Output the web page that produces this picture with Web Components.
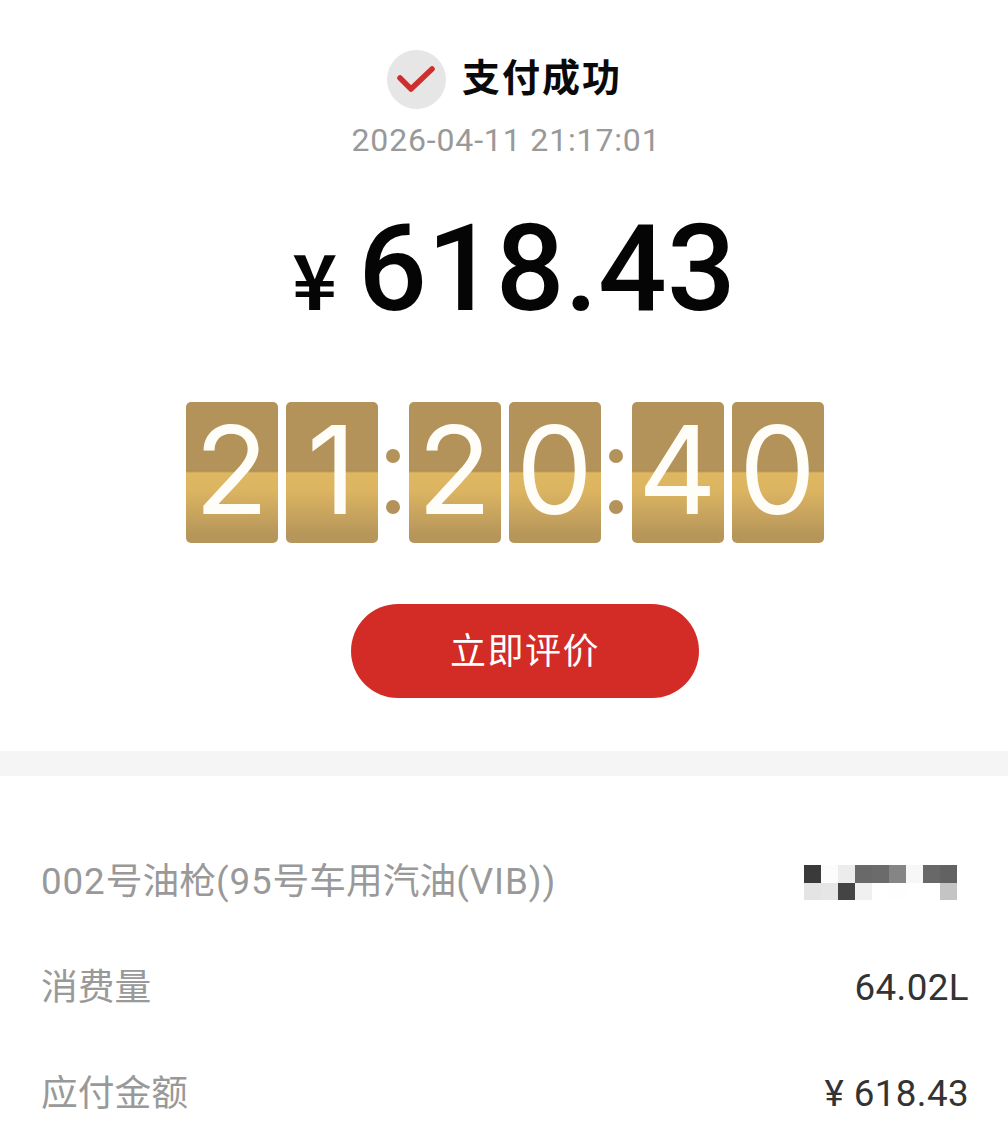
<!DOCTYPE html>
<html lang="zh"><head><meta charset="utf-8">
<style>
html,body{margin:0;padding:0;background:#fff}
body{width:1008px;height:1146px;overflow:hidden;font-family:Roboto,"Noto Sans CJK SC",sans-serif}
</style></head><body>
<pay-result></pay-result>
<script>
function def(name,html,init){
  customElements.define(name,class extends HTMLElement{
    constructor(){super();this.attachShadow({mode:'open'}).innerHTML=html;}
    connectedCallback(){if(init)init(this);}
  });
}
def('flip-digit',`<style>
:host{display:block;width:92px;height:141px;border-radius:5px;position:relative;
background:linear-gradient(#b39359 0,#b39359 68px,#ad8d50 69px,#dfb761 71px,#dcb562 88px,#b7965a 132px,#b6955a 141px);
color:#fffdf8;font:400 122px/135px Inter,sans-serif;text-align:center}
</style><slot></slot>`);
def('flip-colon',`<style>
:host{display:flex;flex-direction:column;justify-content:center;gap:37px;width:15px;align-items:center;height:141px;padding-top:18px;box-sizing:border-box}
i{width:14px;height:14px;border-radius:50%;background:#b39359;display:block}
</style><i></i><i></i>`);
def('pixel-mask',`<style>
:host{display:grid;grid-template-columns:repeat(9,17px);grid-template-rows:18px 17px}
i{display:block}
</style>`,el=>{
  if(el.shadowRoot.querySelector('i'))return;
  const c=['3a3a3a','fcfcfc','ececec','696969','6b6b6b','858585','f7f7f7','686868','626262',
           'e4e4e4','e6e6e6','444444','f0f0f0','ffffff','fefefe','ffffff','ffffff','c4c4c4'];
  c.forEach(x=>{const i=document.createElement('i');i.style.background='#'+x;el.shadowRoot.appendChild(i);});
});
def('info-row',`<style>
:host{display:flex;justify-content:space-between;align-items:center;height:106px;color:#999;font:400 36.75px/50px Roboto,"Noto Sans CJK SC",sans-serif}
.r{color:#333;display:flex;align-items:center;letter-spacing:.4px}
</style><div class="l"><slot name="l"></slot></div><div class="r"><slot name="r"></slot></div>`);
def('pay-result',`<style>
:host{display:block;width:1008px}
.top{display:flex;flex-direction:column;align-items:center;height:751px;box-sizing:border-box;padding-top:50px}
.head{display:flex;align-items:center;gap:16px;height:59px;margin-left:1px}
.icon{width:59px;height:59px;border-radius:50%;background:#e6e6e6;display:flex;align-items:center;justify-content:center}
h1{margin:0;font:700 38px/50px "Noto Sans CJK SC",sans-serif;padding-bottom:9px;color:#0a0a0a;letter-spacing:2px}
.time{margin-top:9px;margin-left:4px;font:400 32px/44px Roboto,"Noto Sans CJK SC",sans-serif;color:#999;letter-spacing:.85px}
.amt{margin-top:45px;display:flex;align-items:baseline;gap:21px;height:130px;color:#050505;font:500 121px/125px Roboto,sans-serif;margin-left:20px}
.amt span{font:700 76px/1 "Noto Sans CJK SC",sans-serif}
.flip{margin-top:65px;display:flex;gap:8px;margin-left:1px}
.btn{margin-top:61px;width:348px;height:94px;box-sizing:border-box;padding-bottom:6px;border-radius:47px;background:#d32b25;color:#fff;display:flex;align-items:center;justify-content:center;font:400 36px/1 "Noto Sans CJK SC",sans-serif;letter-spacing:1.5px;margin-left:42px}
.band{height:25px;background:#f5f5f5}
.list{padding:53px 39px 0 41px}
</style>
<section class="top">
  <div class="head">
    <div class="icon"><svg width="38" height="28" viewBox="0 0 38 28"><path d="M3 12 L14 23 L35 3" fill="none" stroke="#cf2e2e" stroke-width="5.5" stroke-linecap="round" stroke-linejoin="round"/></svg></div>
    <h1>支付成功</h1>
  </div>
  <div class="time">2026-04-11 21:17:01</div>
  <div class="amt"><span>¥</span>618.43</div>
  <div class="flip">
    <flip-digit>2</flip-digit><flip-digit>1</flip-digit><flip-colon></flip-colon>
    <flip-digit>2</flip-digit><flip-digit>0</flip-digit><flip-colon></flip-colon>
    <flip-digit>4</flip-digit><flip-digit>0</flip-digit>
  </div>
  <div class="btn">立即评价</div>
</section>
<div class="band"></div>
<div class="list">
  <info-row><span slot="l"><span style="letter-spacing:.9px">002</span>号油枪<span style="letter-spacing:.9px">(95</span>号车用汽油<span style="letter-spacing:.9px">(VIB))</span></span><pixel-mask slot="r" style="margin-right:12px"></pixel-mask></info-row>
  <info-row><span slot="l">消费量</span><span slot="r">64.02L</span></info-row>
  <info-row><span slot="l">应付金额</span><span slot="r">¥ 618.43</span></info-row>
</div>`);
</script>
</body></html>
